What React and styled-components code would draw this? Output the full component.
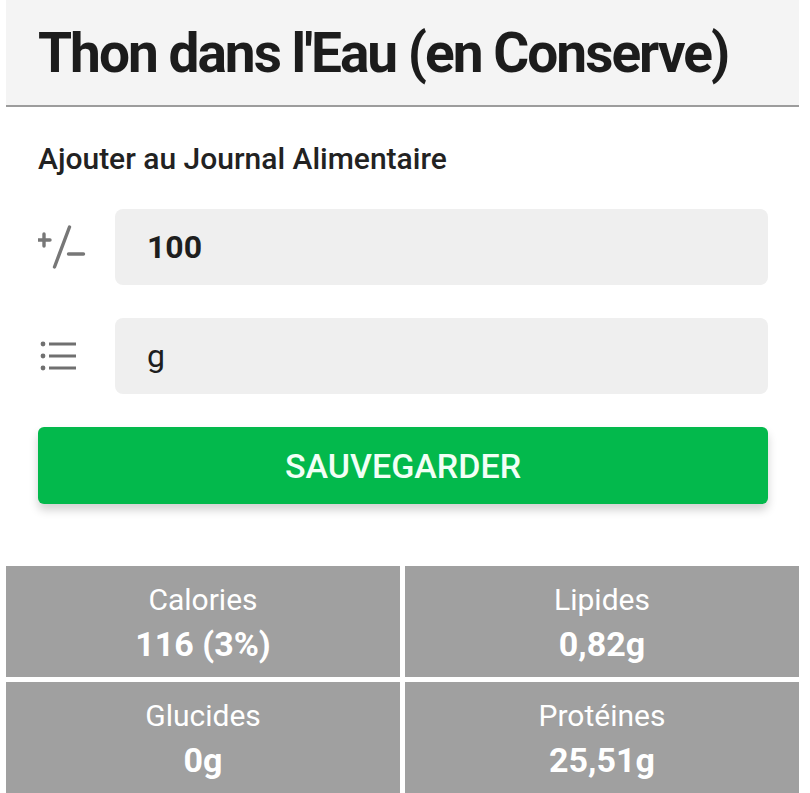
import styled, { createGlobalStyle } from 'styled-components';

const GlobalStyle = createGlobalStyle`
	html, body {
		margin: 0;
		padding: 0;
		background: #fff;
	}
	body {
		font-family: Roboto, 'Liberation Sans', sans-serif;
	}
`;

const nutrients = [
	{ label: 'Calories', value: '116 (3%)' },
	{ label: 'Lipides', value: '0,82g' },
	{ label: 'Glucides', value: '0g' },
	{ label: 'Protéines', value: '25,51g' }
];

const PlusMinusIcon = () => (
	<svg width="50" height="46" viewBox="0 0 50 46">
		<g stroke="#777" strokeWidth="3.4" strokeLinecap="round" fill="none">
			<path d="M0 16h12M6 10v12" />
			<path d="M31.5 3L16.5 43" />
			<path d="M30.5 30h15" />
		</g>
	</svg>
);

const ListIcon = () => (
	<svg width="40" height="32" viewBox="0 0 40 32">
		<g fill="#707070">
			<circle cx="5" cy="4" r="2.4" />
			<circle cx="5" cy="16" r="2.4" />
			<circle cx="5" cy="28" r="2.4" />
		</g>
		<g stroke="#707070" strokeWidth="3">
			<path d="M11 4h27M11 16h27M11 28h27" />
		</g>
	</svg>
);

const App = () => {
	return (
		<Page>
			<GlobalStyle />
			<Header>
				<Title>Thon dans l'Eau (en Conserve)</Title>
			</Header>
			<Form>
				<Subtitle>Ajouter au Journal Alimentaire</Subtitle>
				<FieldRow>
					<IconCell>
						<PlusMinusIcon />
					</IconCell>
					<Field bold>100</Field>
				</FieldRow>
				<FieldRow>
					<IconCell>
						<ListIcon />
					</IconCell>
					<Field>g</Field>
				</FieldRow>
				<SaveButton>SAUVEGARDER</SaveButton>
			</Form>
			<Grid>
				{nutrients.map((n) => (
					<Cell key={n.label}>
						<CellLabel>{n.label}</CellLabel>
						<CellValue>{n.value}</CellValue>
					</Cell>
				))}
			</Grid>
		</Page>
	);
};

const Page = styled.div`
	width: 810px;
	padding: 0 11px 0 6px;
	box-sizing: border-box;
`;
const Header = styled.div`
	background: #f4f4f4;
	height: 105px;
	border-bottom: 2px solid #9c9c9c;
	padding-left: 32px;
	display: flex;
	align-items: center;
`;
const Title = styled.h1`
	margin: 0;
	font-size: 55px;
	font-weight: 700;
	color: #1c1c1c;
	letter-spacing: -2px;
`;
const Form = styled.div`
	padding: 35px 31px 0 32px;
	display: flex;
	flex-direction: column;
`;
const Subtitle = styled.div`
	font-size: 30px;
	font-weight: 500;
	color: #222;
	line-height: 34px;
	margin-bottom: 33px;
`;
const FieldRow = styled.div`
	display: flex;
	align-items: center;
	margin-bottom: 33px;
`;
const IconCell = styled.div`
	width: 77px;
	display: flex;
	align-items: center;
`;
const Field = styled.div`
	flex: 1;
	height: 76px;
	background: #efefef;
	border-radius: 8px;
	display: flex;
	align-items: center;
	padding-left: 32px;
	font-size: 32px;
	font-weight: ${(p) => (p.bold ? 700 : 400)};
	color: #1e1e1e;
`;
const SaveButton = styled.button`
	height: 77px;
	border: none;
	border-radius: 6px;
	background: #03b94c;
	color: #f2fff6;
	font-family: Roboto, 'Liberation Sans', sans-serif;
	font-size: 34px;
	font-weight: 500;
	box-shadow: 0 6px 10px rgba(0, 0, 0, 0.18);
`;
const Grid = styled.div`
	margin-top: 62px;
	display: grid;
	grid-template-columns: 1fr 1fr;
	grid-auto-rows: 111px;
	gap: 5px;
`;
const Cell = styled.div`
	background: #a0a0a0;
	color: #fff;
	display: flex;
	flex-direction: column;
	align-items: center;
	justify-content: center;
	padding-top: 7px;
	box-sizing: border-box;
`;
const CellLabel = styled.div`
	font-size: 30px;
	line-height: 38px;
`;
const CellValue = styled.div`
	font-size: 34px;
	font-weight: 700;
	line-height: 50px;
`;

export default App;
